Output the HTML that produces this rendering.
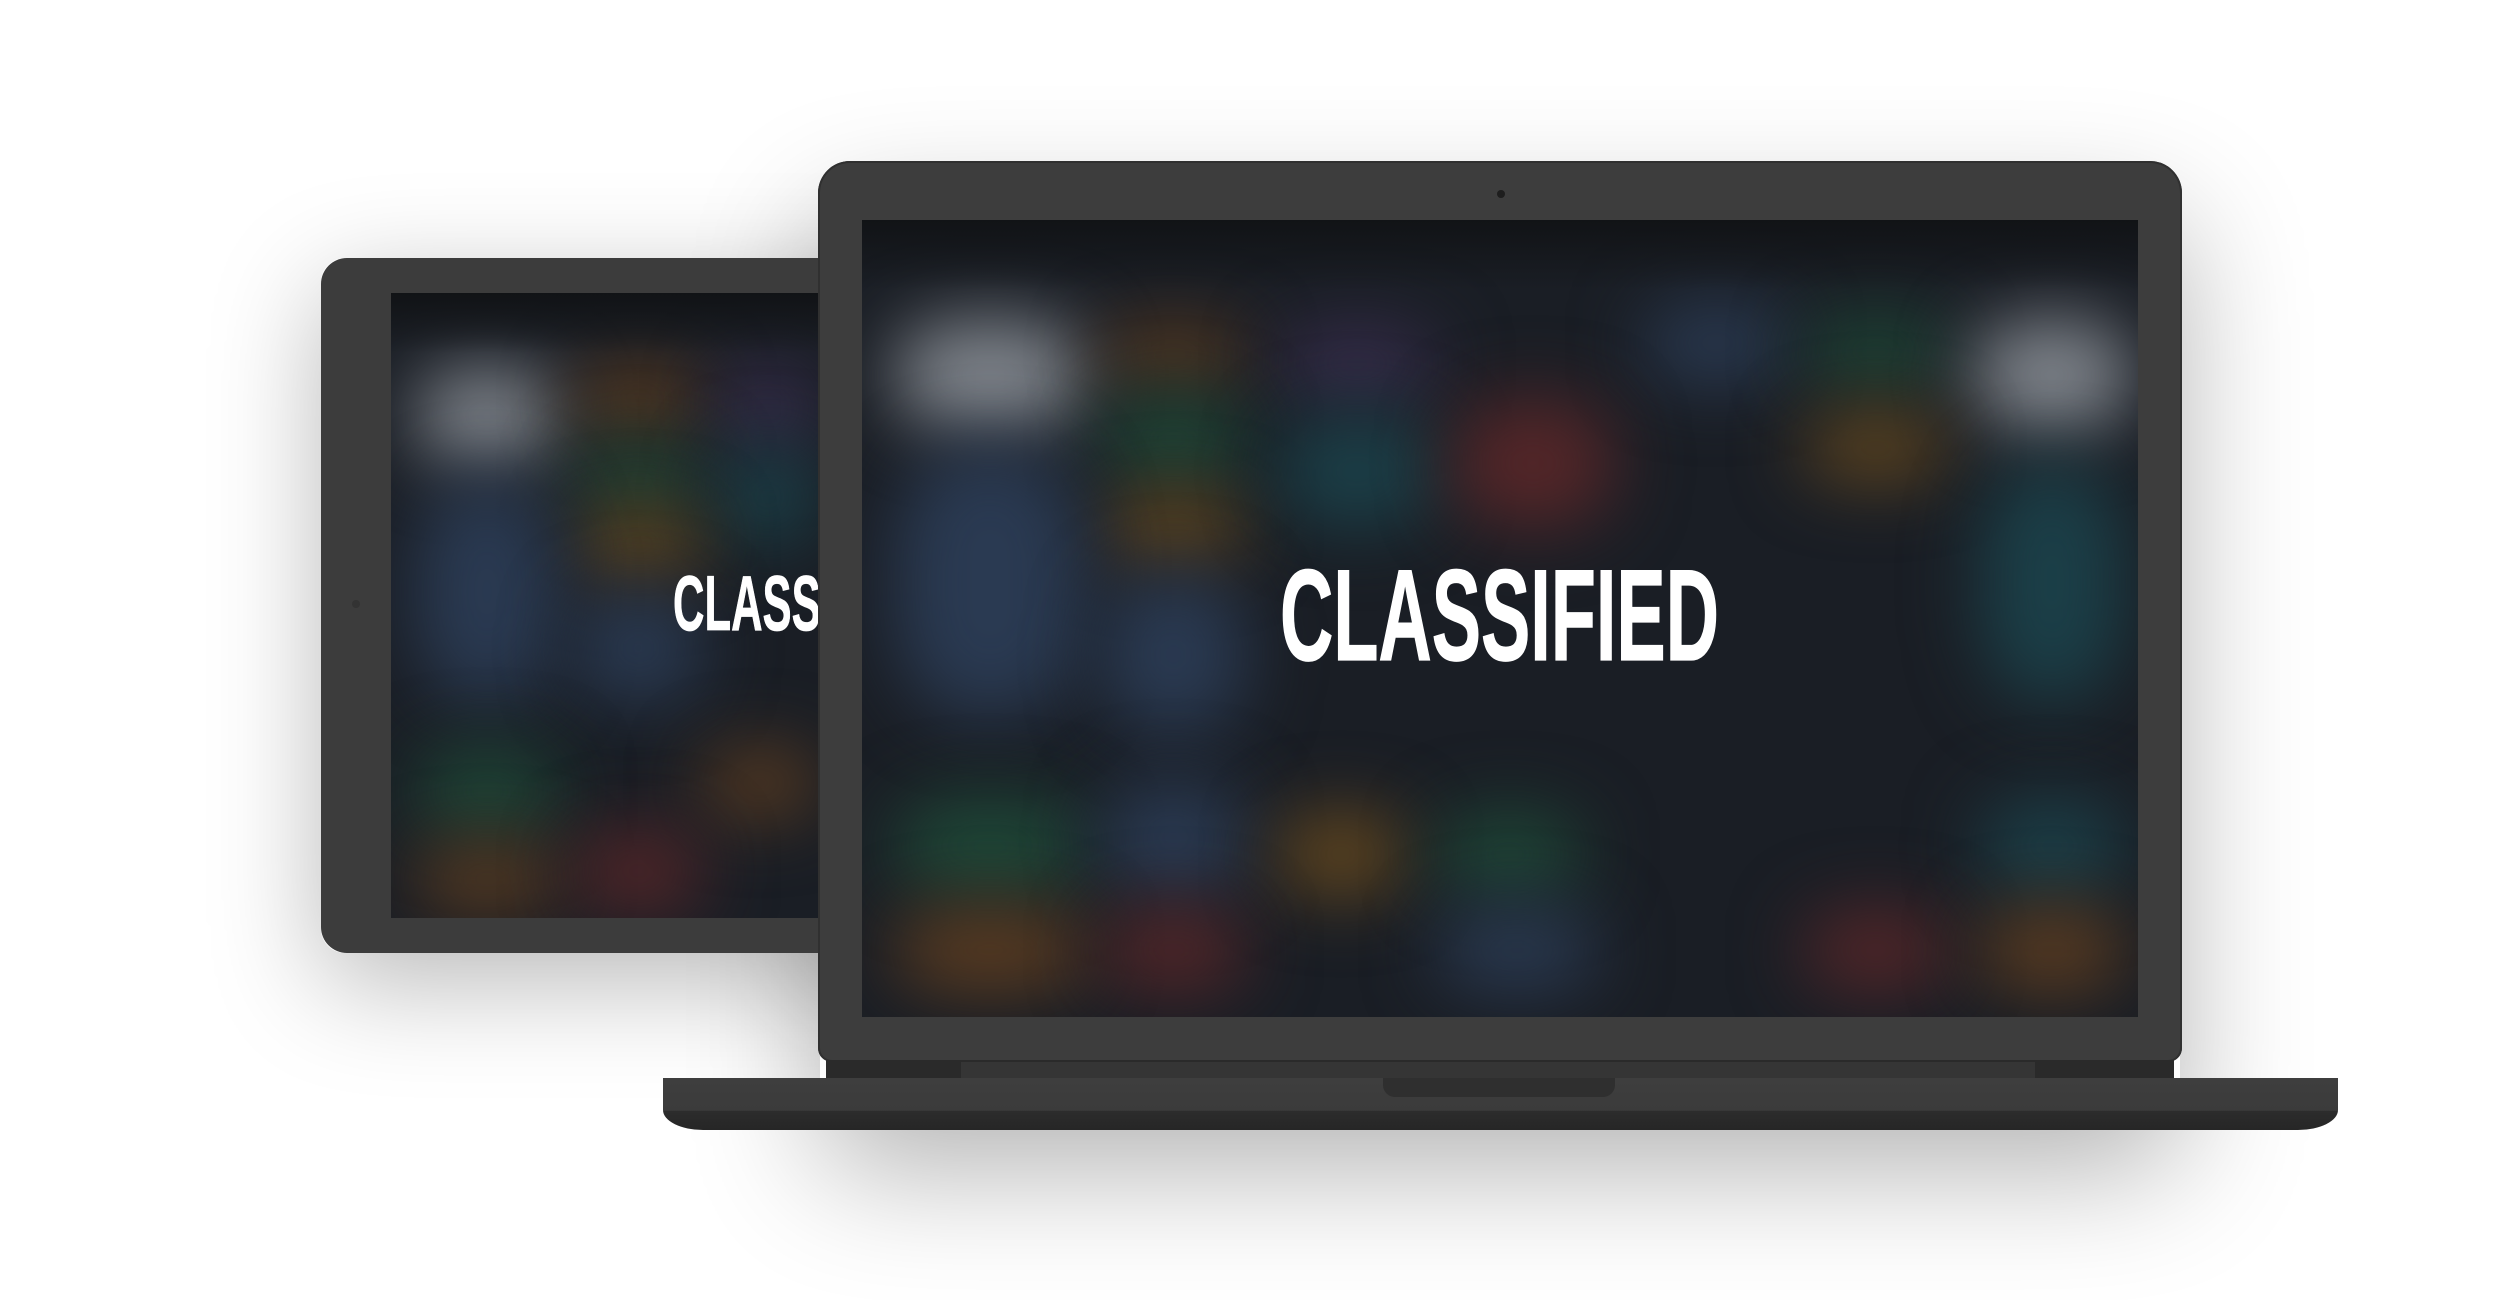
<!DOCTYPE html>
<html><head><meta charset="utf-8"><style>
html,body{margin:0;padding:0;background:#fff;width:2504px;height:1300px;overflow:hidden;position:relative}
.abs{position:absolute}
.scr{position:absolute;overflow:hidden;background:#1a1e25}
.b{position:absolute;border-radius:40%;filter:blur(36px)}
.g{background:#80858c}.o{background:#5e3d20}.p{background:#372d4c}.bl{background:#2a3a52}.gr{background:#1e4837}.t{background:#1b3f48}.r{background:#552628}.oy{background:#65481e}
</style></head><body>
<div class="abs" style="left:321px;top:258px;width:600px;height:695px;border-radius:24px;box-shadow:0 30px 110px rgba(0,0,0,0.28)"></div>
<div class="abs" style="left:820px;top:170px;width:1360px;height:950px;border-radius:30px;box-shadow:0 50px 140px rgba(0,0,0,0.3)"></div>

<div class="abs" style="left:321px;top:258px;width:600px;height:695px;border-radius:26px;background:#3c3c3c"></div>
<div class="abs" style="left:352px;top:600px;width:8px;height:8px;border-radius:50%;background:#333"></div>
<div class="scr" style="left:391px;top:293px;width:430px;height:625px">
 <div class="b g" style="left:24px;top:75px;width:144px;height:96px"></div>
 <div class="b o" style="left:184px;top:75px;width:127px;height:64px"></div>
 <div class="b p" style="left:327px;top:75px;width:100px;height:80px"></div>
 <div class="b gr" style="left:184px;top:155px;width:127px;height:64px"></div>
 <div class="b t" style="left:327px;top:155px;width:100px;height:96px"></div>
 <div class="b oy" style="left:184px;top:219px;width:127px;height:64px"></div>
 <div class="b bl" style="left:24px;top:187px;width:144px;height:223px"></div>
 <div class="b bl" style="left:184px;top:300px;width:127px;height:110px"></div>
 <div class="b gr" style="left:24px;top:458px;width:144px;height:80px"></div>
 <div class="b o" style="left:311px;top:458px;width:116px;height:64px"></div>
 <div class="b o" style="left:24px;top:554px;width:144px;height:64px"></div>
 <div class="b r" style="left:184px;top:538px;width:127px;height:80px"></div>
 <div class="abs" style="left:0;top:0;width:100%;height:60px;background:linear-gradient(#111316,rgba(17,19,22,0))"></div>
 <svg class="abs" style="left:0;top:0" width="430" height="625"><text x="282" y="337" textLength="259" lengthAdjust="spacingAndGlyphs" font-family="Liberation Sans Narrow, Liberation Sans, sans-serif" font-weight="bold" font-size="78" fill="#fff" stroke="#fff" stroke-width="0.8">CLASSIFIED</text></svg>
</div>

<div class="abs" style="left:818px;top:161px;width:1364px;height:901px;border-radius:32px 32px 14px 14px;background:#3d3d3d;box-shadow:inset 0 0 0 2px #303030"></div>
<div class="abs" style="left:1497px;top:190px;width:8px;height:8px;border-radius:50%;background:#1e1e1e"></div>
<div class="scr" style="left:862px;top:220px;width:1276px;height:797px">
 <div class="b g" style="left:32px;top:99px;width:192px;height:112px"></div>
 <div class="b o" style="left:240px;top:107px;width:143px;height:56px"></div>
 <div class="b p" style="left:415px;top:107px;width:160px;height:72px"></div>
 <div class="b bl" style="left:782px;top:83px;width:144px;height:80px"></div>
 <div class="b gr" style="left:942px;top:99px;width:144px;height:64px"></div>
 <div class="b g" style="left:1110px;top:99px;width:160px;height:112px"></div>
 <div class="b gr" style="left:240px;top:179px;width:143px;height:80px"></div>
 <div class="b oy" style="left:240px;top:275px;width:143px;height:64px"></div>
 <div class="b t" style="left:415px;top:195px;width:160px;height:112px"></div>
 <div class="b r" style="left:591px;top:179px;width:160px;height:128px"></div>
 <div class="b oy" style="left:942px;top:195px;width:144px;height:64px"></div>
 <div class="b bl" style="left:32px;top:227px;width:192px;height:271px"></div>
 <div class="b bl" style="left:240px;top:355px;width:143px;height:159px"></div>
 <div class="b t" style="left:1118px;top:243px;width:144px;height:239px"></div>
 <div class="b gr" style="left:32px;top:578px;width:192px;height:96px"></div>
 <div class="b bl" style="left:240px;top:562px;width:143px;height:112px"></div>
 <div class="b oy" style="left:415px;top:594px;width:128px;height:80px"></div>
 <div class="b gr" style="left:575px;top:594px;width:144px;height:80px"></div>
 <div class="b t" style="left:1118px;top:578px;width:144px;height:96px"></div>
 <div class="b o" style="left:32px;top:690px;width:192px;height:80px"></div>
 <div class="b r" style="left:240px;top:690px;width:143px;height:80px"></div>
 <div class="b bl" style="left:575px;top:690px;width:160px;height:80px"></div>
 <div class="b r" style="left:942px;top:690px;width:144px;height:80px"></div>
 <div class="b o" style="left:1118px;top:690px;width:144px;height:80px"></div>
 <div class="abs" style="left:0;top:0;width:100%;height:70px;background:linear-gradient(#111316,rgba(17,19,22,0))"></div>
 <svg class="abs" style="left:0;top:0" width="1276" height="797"><text x="418" y="440" textLength="439" lengthAdjust="spacingAndGlyphs" font-family="Liberation Sans Narrow, Liberation Sans, sans-serif" font-weight="bold" font-size="130" fill="#fff" stroke="#fff" stroke-width="1.2">CLASSIFIED</text></svg>
</div>
<div class="abs" style="left:826px;top:1060px;width:1348px;height:18px;background:#2a2a2a"></div>
<div class="abs" style="left:961px;top:1062px;width:1074px;height:16px;background:#353535"></div>
<div class="abs" style="left:663px;top:1078px;width:1675px;height:52px;border-radius:0 0 40px 40px/0 0 20px 20px;background:linear-gradient(#3e3e3e 0,#3b3b3b 62%,#2c2c2c 64%,#262626 100%)"></div>
<div class="abs" style="left:1383px;top:1078px;width:232px;height:19px;border-radius:0 0 12px 12px;background:#2f2f2f"></div>
</body></html>
